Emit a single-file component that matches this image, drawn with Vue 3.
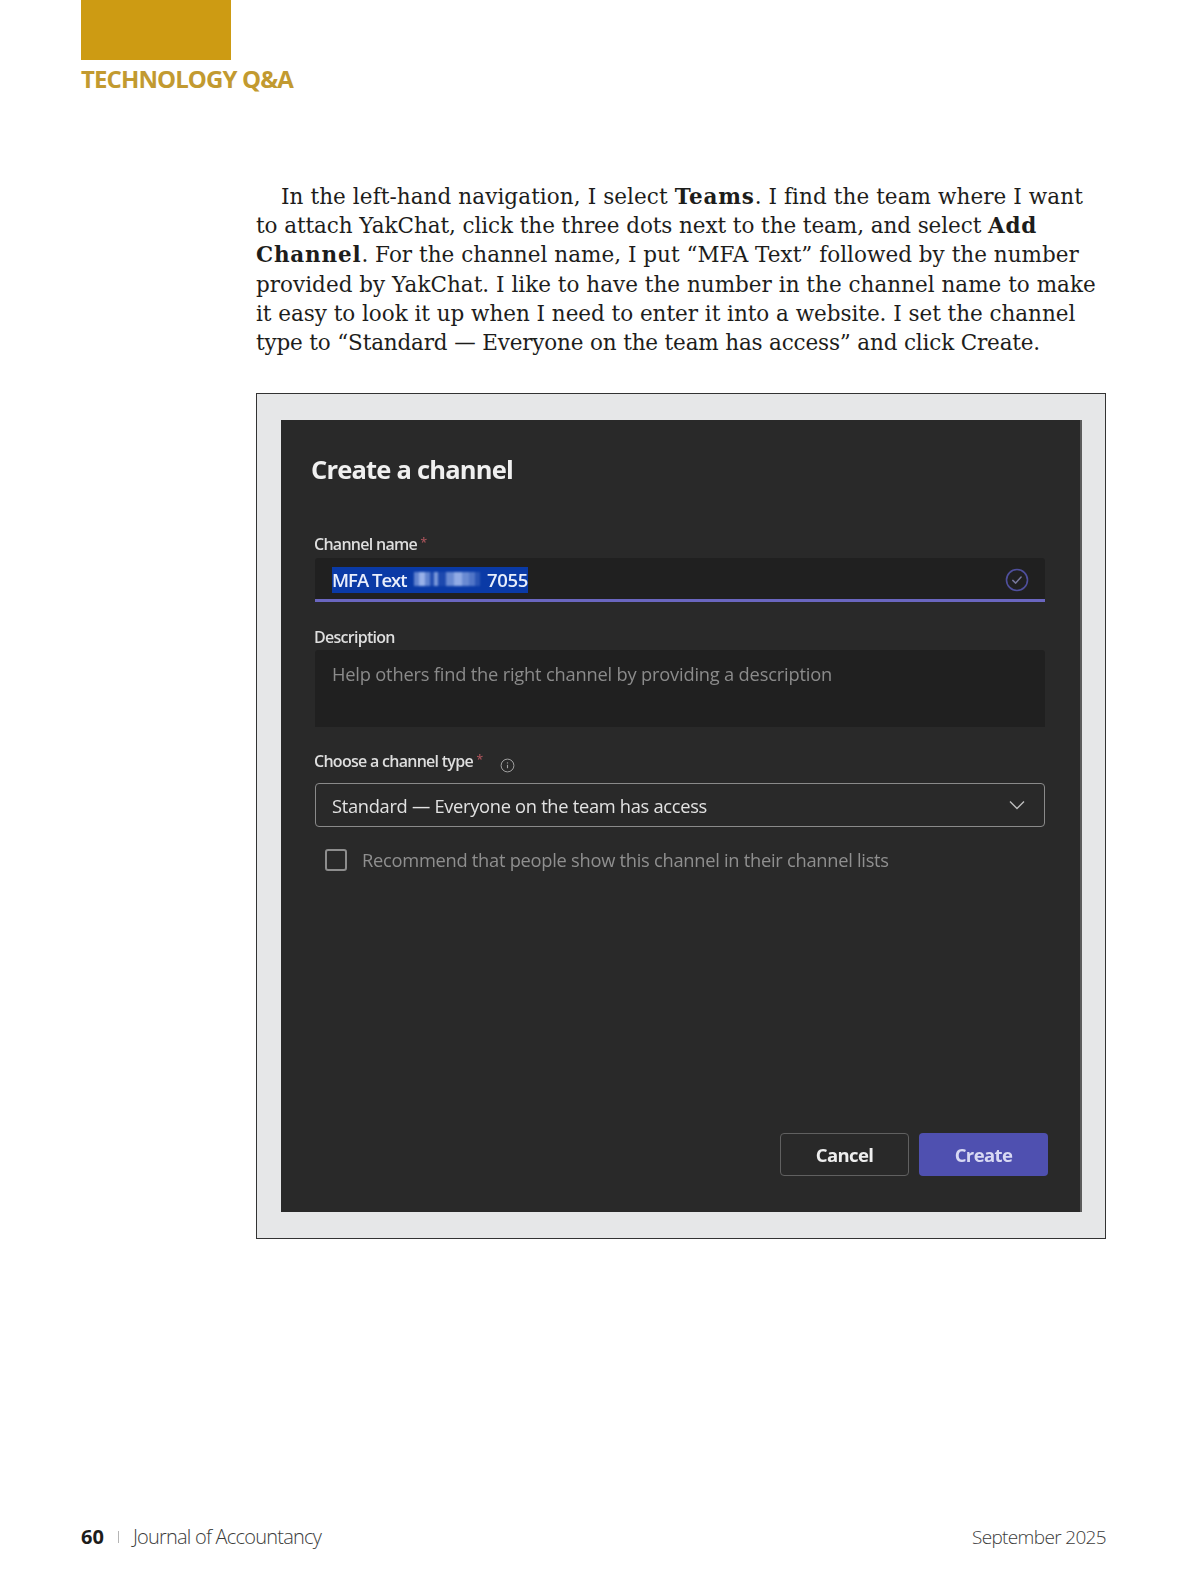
<script setup>
const lines = [
  { a: 'In the left-hand navigation, I select ', b: 'Teams', c: '. I find the team where I want', ls: 0.09 },
  { a: 'to attach YakChat, click the three dots next to the team, and select ', b: 'Add', c: '', ls: -0.07 },
  { a: '', b: 'Channel', c: '. For the channel name, I put “MFA Text” followed by the number', ls: 0.03 },
  { a: 'provided by YakChat. I like to have the number in the channel name to make', b: '', c: '', ls: 0.02 },
  { a: 'it easy to look it up when I need to enter it into a website. I set the channel', b: '', c: '', ls: -0.03 },
  { a: 'type to “Standard — Everyone on the team has access” and click Create.', b: '', c: '', ls: -0.16 },
]
const mosaic = [
  { w: 5, o: 0.55 }, { w: 6, o: 0.9 }, { w: 5, o: 0.55 }, { w: 4, o: 0.15 }, { w: 4, o: 0.7 },
  { w: 8, o: 0.12 }, { w: 8, o: 0.6 }, { w: 8, o: 0.85 }, { w: 7, o: 0.6 }, { w: 6, o: 0.45 }, { w: 5, o: 0.2 },
]
</script>

<template>
  <div class="page">
    <div class="tab"></div>
    <div class="section">TECHNOLOGY Q&amp;A</div>

    <div class="body-text">
      <div v-for="(l, i) in lines" :key="i" class="line" :class="{ first: i === 0 }" :style="{ letterSpacing: l.ls + 'px' }">{{ l.a }}<strong v-if="l.b">{{ l.b }}</strong>{{ l.c }}</div>
    </div>

    <div class="frame">
      <div class="dialog">
        <h1 class="title">Create a channel</h1>

        <div class="label name-label">Channel name <span class="req">*</span></div>
        <div class="input name-input">
          <span class="selection"><span>MFA Text</span><span class="mosaic"><i v-for="(m, i) in mosaic" :key="i" :style="{ width: m.w + 'px', opacity: m.o }"></i></span><span class="tail">7055</span></span>
          <svg class="check" width="24" height="24" viewBox="0 0 24 24" fill="none">
            <circle cx="12" cy="12" r="10.5" stroke="#4f4f9c" stroke-width="1.6" />
            <path d="M7.8 12.4l2.9 2.7 5.4-6" stroke="#77779a" stroke-width="1.5" stroke-linecap="round" stroke-linejoin="round" />
          </svg>
        </div>

        <div class="label desc-label">Description</div>
        <div class="input desc-input">Help others find the right channel by providing a description</div>

        <div class="label type-label">
          <span>Choose a channel type <span class="req">*</span></span>
          <svg class="info" width="15" height="15" viewBox="0 0 15 15" fill="none">
            <circle cx="7.5" cy="7.5" r="6.4" stroke="#a0a0a0" stroke-width="1" />
            <path d="M7.5 6.8v3.4" stroke="#a0a0a0" stroke-width="1.1" />
            <circle cx="7.5" cy="4.9" r="0.7" fill="#a0a0a0" />
          </svg>
        </div>
        <div class="select">
          <span>Standard — Everyone on the team has access</span>
          <svg width="18" height="10" viewBox="0 0 18 10" fill="none">
            <path d="M2 1.5l7 7 7-7" stroke="#bdbdbd" stroke-width="1.4" />
          </svg>
        </div>

        <div class="recommend">
          <span class="box"></span>
          <span>Recommend that people show this channel in their channel lists</span>
        </div>

        <div class="actions">
          <div class="btn cancel">Cancel</div>
          <div class="btn create">Create</div>
        </div>
      </div>
    </div>

    <footer class="footer">
      <div class="foot-left"><b>60</b><span class="sep"></span><span>Journal of Accountancy</span></div>
      <div class="date">September 2025</div>
    </footer>
  </div>
</template>

<style>
html, body { margin: 0; background: #fff; }
</style>

<style scoped>
.page {
  box-sizing: border-box;
  width: 1200px;
  height: 1575px;
  padding: 0 94px 0 81px;
  display: flex;
  flex-direction: column;
  background: #fff;
}
.tab { width: 150px; height: 60px; background: #cd9b13; }
.section {
  margin-top: 3px;
  font: 700 24px/32px "Open Sans", sans-serif;
  letter-spacing: -0.9px;
  color: #c29a30;
  white-space: nowrap;
}
.body-text {
  margin: 87px 0 0 175px;
  font: 400 21.5px/29.2px "DejaVu Serif", serif;
  color: #1d1d1b;
}
.line { white-space: nowrap; }
.line.first { text-indent: 25px; }
.line strong { font-weight: 700; letter-spacing: 0.8px; }
.frame {
  box-sizing: border-box;
  margin: 36px 0 0 175px;
  width: 850px;
  height: 846px;
  padding: 26px 23px 26px 24px;
  border: 1px solid #333;
  background: #e6e7e8;
}
.dialog {
  box-sizing: border-box;
  height: 792px;
  padding: 32px 32px 36px 31px;
  display: flex;
  flex-direction: column;
  background: #292929;
  border-right: 2px solid #5c5c5c;
  font-family: "Open Sans", sans-serif;
  color: #e6e6e6;
  filter: blur(0.35px);
}
.title {
  margin: 0 0 0 -1px;
  font-size: 25.5px;
  line-height: 34px;
  font-weight: 700;
  letter-spacing: -0.8px;
  color: #f0f0f0;
}
.label {
  margin-left: 2px;
  font-size: 16px;
  line-height: 20px;
  font-weight: 600;
  letter-spacing: -0.72px;
  color: #dedede;
}
.req { color: #a8535a; font-size: 12px; vertical-align: 3px; }
.name-label { margin-top: 47px; }
.input {
  box-sizing: border-box;
  margin-left: 3px;
  background: #202020;
  border-radius: 3px 3px 0 0;
  width: 730px;
}
.name-input {
  margin-top: 4px;
  height: 44px;
  padding: 9px 16px 0 17px;
  display: flex;
  justify-content: space-between;
  align-items: flex-start;
  border-bottom: 3px solid #6a66c0;
}
.selection {
  box-sizing: border-box;
  display: flex;
  align-items: center;
  justify-content: space-between;
  height: 26px;
  width: 196px;
  padding-bottom: 2px;
  white-space: pre;
  background: #0a3aa6;
  color: #e9eefb;
  font-size: 18.5px;
  font-weight: 600;
  letter-spacing: -1px;
}
.tail { letter-spacing: -0.3px; }
.mosaic { display: inline-flex; height: 14px; filter: blur(1px); }
.mosaic i { display: block; background: #a9bff0; }
.check { margin-top: 1px; }
.desc-label { margin-top: 25px; }
.desc-input {
  margin-top: 3px;
  height: 77px;
  padding: 10px 0 0 17px;
  font-size: 18.3px;
  line-height: 28px;
  font-weight: 500;
  letter-spacing: -0.2px;
  color: #8b8b8b;
}
.type-label {
  margin-top: 20px;
  display: flex;
  align-items: center;
  gap: 18px;
}
.info { margin-top: 11px; }
.select {
  box-sizing: border-box;
  margin: 10px 0 0 3px;
  width: 730px;
  height: 44px;
  padding: 0 18px 0 16px;
  display: flex;
  align-items: center;
  justify-content: space-between;
  border: 1.5px solid #8a8a8a;
  border-radius: 4px;
  font-size: 18.3px;
  font-weight: 500;
  letter-spacing: -0.3px;
  color: #e2e2e2;
}
.recommend {
  margin: 22px 0 0 13px;
  display: flex;
  align-items: center;
  gap: 15px;
  font-size: 18.3px;
  line-height: 22px;
  font-weight: 500;
  letter-spacing: -0.27px;
  color: #8f8f8f;
}
.box {
  box-sizing: border-box;
  width: 22px;
  height: 22px;
  border: 2px solid #8d8d8d;
  border-radius: 3px;
}
.actions {
  margin-top: auto;
  display: flex;
  justify-content: flex-end;
  gap: 10px;
}
.btn {
  box-sizing: border-box;
  width: 129px;
  height: 43px;
  border-radius: 4px;
  display: flex;
  align-items: center;
  justify-content: center;
  font-size: 18.5px;
  font-weight: 700;
  letter-spacing: -0.6px;
}
.cancel { border: 1.5px solid #606060; color: #eee; }
.create { background: #4f50b0; color: #d8d9f3; }
.footer {
  margin-top: auto;
  margin-bottom: 24px;
  display: flex;
  justify-content: space-between;
  align-items: center;
  font: 300 20px/28px "Open Sans", sans-serif;
  letter-spacing: -0.78px;
  color: #3c3c3b;
}
.foot-left { display: flex; align-items: center; }
.foot-left b { font-weight: 700; color: #1d1d1b; letter-spacing: 0; }
.sep { width: 1px; height: 12px; margin: 0 14px 0 14px; background: #b5b5b5; }
.date { font-size: 19px; letter-spacing: -0.65px; }
</style>
